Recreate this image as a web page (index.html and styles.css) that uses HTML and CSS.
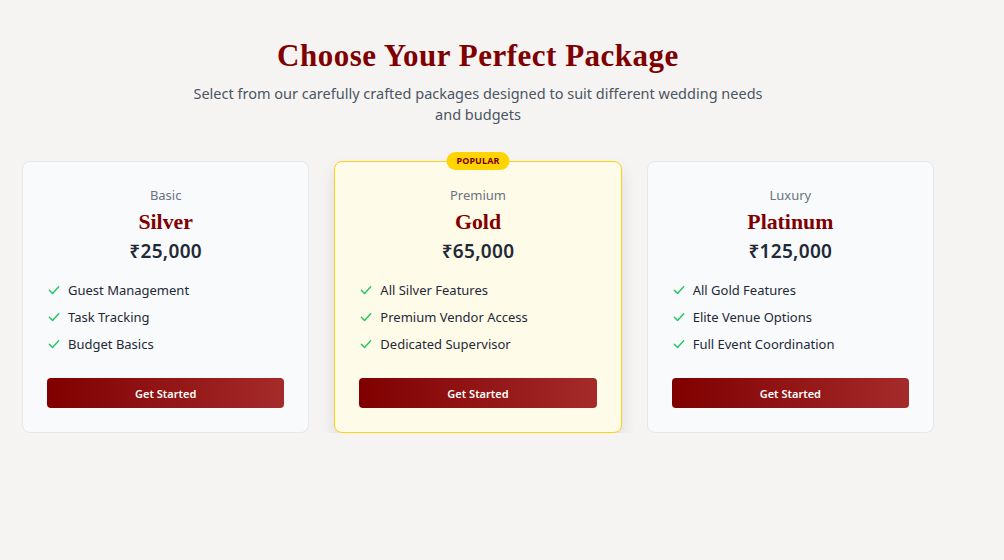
FILE: index.html
```html
<!DOCTYPE html>
<html lang="en">
<head>
<meta charset="utf-8">
<title>Choose Your Perfect Package</title>
<link rel="stylesheet" href="styles.css">
</head>
<body>
<section class="packages">
  <h1 class="title">Choose Your Perfect Package</h1>
  <p class="subtitle">Select from our carefully crafted packages designed to suit different wedding needs<br>and budgets</p>
  <div class="grid">
    <div class="card">
      <div class="tier">Basic</div>
      <h2 class="name">Silver</h2>
      <div class="price">₹25,000</div>
      <ul class="features">
        <li><svg class="check" viewBox="0 0 24 24"><polyline points="4 12.5 9.5 18 20 6.5"/></svg>Guest Management</li>
        <li><svg class="check" viewBox="0 0 24 24"><polyline points="4 12.5 9.5 18 20 6.5"/></svg>Task Tracking</li>
        <li><svg class="check" viewBox="0 0 24 24"><polyline points="4 12.5 9.5 18 20 6.5"/></svg>Budget Basics</li>
      </ul>
      <button class="btn">Get Started</button>
    </div>
    <div class="card popular">
      <span class="badge">POPULAR</span>
      <div class="tier">Premium</div>
      <h2 class="name">Gold</h2>
      <div class="price">₹65,000</div>
      <ul class="features">
        <li><svg class="check" viewBox="0 0 24 24"><polyline points="4 12.5 9.5 18 20 6.5"/></svg>All Silver Features</li>
        <li><svg class="check" viewBox="0 0 24 24"><polyline points="4 12.5 9.5 18 20 6.5"/></svg>Premium Vendor Access</li>
        <li><svg class="check" viewBox="0 0 24 24"><polyline points="4 12.5 9.5 18 20 6.5"/></svg>Dedicated Supervisor</li>
      </ul>
      <button class="btn">Get Started</button>
    </div>
    <div class="card">
      <div class="tier">Luxury</div>
      <h2 class="name">Platinum</h2>
      <div class="price">₹125,000</div>
      <ul class="features">
        <li><svg class="check" viewBox="0 0 24 24"><polyline points="4 12.5 9.5 18 20 6.5"/></svg>All Gold Features</li>
        <li><svg class="check" viewBox="0 0 24 24"><polyline points="4 12.5 9.5 18 20 6.5"/></svg>Elite Venue Options</li>
        <li><svg class="check" viewBox="0 0 24 24"><polyline points="4 12.5 9.5 18 20 6.5"/></svg>Full Event Coordination</li>
      </ul>
      <button class="btn">Get Started</button>
    </div>
  </div>
</section>
</body>
</html>
```
FILE: styles.css
```css
* { box-sizing: border-box; }
html, body { margin: 0; padding: 0; }
body {
  background: #f5f4f2;
  font-family: "Noto Sans", "DejaVu Sans", sans-serif;
  color: #1f2937;
}
.packages {
  width: 912px;
  margin-left: 22px;
  padding-top: 38px;
  display: flex;
  flex-direction: column;
  align-items: center;
}
.title {
  margin: 0;
  font-family: "Liberation Serif", "DejaVu Serif", serif;
  font-weight: 700;
  font-size: 31px;
  line-height: 36px;
  letter-spacing: 0.5px;
  color: #800000;
}
.subtitle {
  margin: 9px 0 0;
  font-size: 14.5px;
  line-height: 21px;
  color: #4b5563;
  text-align: center;
}
.grid {
  margin-top: 36px;
  width: 100%;
  display: grid;
  grid-template-columns: repeat(3, 1fr);
  gap: 25px;
}
.card {
  position: relative;
  background: #f8fafc;
  border: 1px solid #e5e7eb;
  border-radius: 8px;
  padding: 23px 24px 24px;
  display: flex;
  flex-direction: column;
  align-items: center;
}
.card.popular {
  background: #fefbe9;
  border-color: #fcd116;
  box-shadow: 0 8px 16px rgba(0,0,0,0.10);
}
.badge {
  position: absolute;
  top: -10px;
  left: 50%;
  transform: translateX(-50%);
  background: #ffd400;
  color: #7a0000;
  font-size: 9px;
  font-weight: 700;
  line-height: 18px;
  padding: 0 10px;
  border-radius: 9px;
  letter-spacing: 0.1px;
}
.tier {
  font-size: 13px;
  line-height: 20px;
  color: #6b7280;
}
.name {
  margin: 4px 0 0;
  font-family: "Liberation Serif", "DejaVu Serif", serif;
  font-weight: 700;
  font-size: 21.8px;
  line-height: 26px;
  color: #800000;
}
.price {
  margin-top: 3px;
  font-size: 19px;
  font-weight: 600;
  line-height: 26px;
  letter-spacing: 0.3px;
  color: #1f2937;
}
.features {
  list-style: none;
  margin: 16px 0 0;
  padding: 0;
  width: 100%;
  display: flex;
  flex-direction: column;
  gap: 7px;
}
.features li {
  display: flex;
  align-items: center;
  gap: 7px;
  font-size: 13px;
  line-height: 20px;
  color: #1f2937;
}
.check {
  width: 14px;
  height: 14px;
  fill: none;
  stroke: #22c55e;
  stroke-width: 2.4;
  stroke-linecap: round;
  stroke-linejoin: round;
}
.btn {
  margin-top: 24px;
  width: 100%;
  height: 30px;
  border: 0;
  border-radius: 4px;
  background: linear-gradient(90deg, #800000 0%, #a52a2a 100%);
  color: #ffffff;
  font-family: inherit;
  font-size: 11px;
  font-weight: 600;
  cursor: pointer;
}
```
